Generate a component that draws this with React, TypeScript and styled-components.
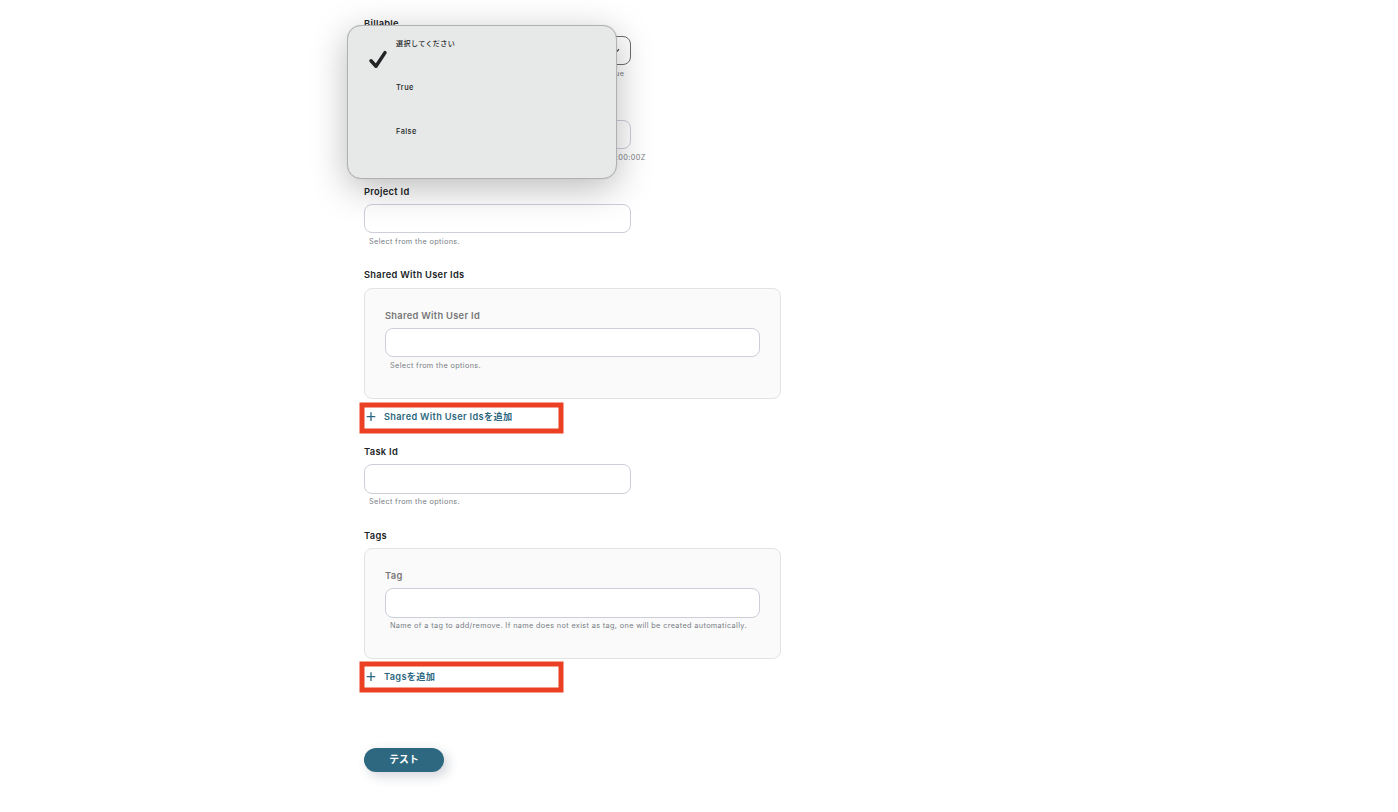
import type { ReactNode } from 'react';
import React from 'react';
import styled, { createGlobalStyle } from 'styled-components';

const colors = {
  text: '#222426',
  muted: '#777777',
  hint: '#777c84',
  border: '#cccfd8',
  borderActive: '#6b6e71',
  panel: '#fafafa',
  panelBorder: '#e3e3e5',
  primary: '#2d6880',
  highlight: '#ec4025',
  menu: '#e7e9e8',
};

const GlobalStyles = createGlobalStyle`
  * {
    box-sizing: border-box;
  }

  body {
    margin: 0;
    background: #fff;
    font-family: Inter, 'Noto Sans CJK JP', sans-serif;
    color: ${colors.text};
  }
`;

const Page = styled.main`
  display: flex;
  flex-direction: column;
  align-items: flex-start;
  position: relative;
  height: 812px;
  overflow: hidden;
  padding: 17px 0 0 364px;
`;

const FieldBox = styled.div<{ $gap?: number }>`
  display: flex;
  flex-direction: column;
  width: 100%;
  margin-bottom: ${props => props.$gap ?? 22}px;
`;

const Label = styled.label<{ $muted?: boolean; $space?: number }>`
  height: 13px;
  margin-bottom: ${props => props.$space ?? 6}px;
  font-size: 9.3px;
  font-weight: 600;
  line-height: 13px;
  letter-spacing: 0.3px;
  white-space: nowrap;
  color: ${props => (props.$muted ? colors.muted : colors.text)};
`;

const Control = styled.div<{
  $width?: string;
  $height?: number;
  $active?: boolean;
}>`
  display: flex;
  align-items: center;
  justify-content: flex-end;
  width: ${props => props.$width ?? '267px'};
  height: ${props => props.$height ?? 29}px;
  padding-right: 10px;
  border: 1px solid
    ${props => (props.$active ? colors.borderActive : colors.border)};
  border-radius: 8px;
  background: #fff;
`;

const Hint = styled.p<{ $top?: number; $width?: number }>`
  width: ${props => (props.$width ? props.$width + 'px' : 'auto')};
  height: 11px;
  margin: ${props => props.$top ?? 3}px 0 0 5px;
  font-size: 7.3px;
  line-height: 11px;
  letter-spacing: 0.36px;
  white-space: nowrap;
  text-align: ${props => (props.$width ? 'right' : 'left')};
  color: ${colors.hint};
`;

const Panel = styled.section`
  width: 417px;
  height: 111px;
  padding: 20px;
  border: 1px solid ${colors.panelBorder};
  border-radius: 8px;
  background: ${colors.panel};
`;

const AddButton = styled.button<{ $top: number; $bottom: number }>`
  display: flex;
  align-items: center;
  position: relative;
  gap: 8px;
  width: 194px;
  height: 13px;
  margin: ${props => props.$top}px 0 ${props => props.$bottom}px;
  padding: 0 0 0 2px;
  border: 0;
  background: none;
  font-family: inherit;
  font-size: 9.2px;
  font-weight: 600;
  line-height: 13px;
  letter-spacing: 0.33px;
  white-space: nowrap;
  color: ${colors.primary};
`;

const Highlight = styled.span<{ $top: number }>`
  position: absolute;
  top: ${props => props.$top}px;
  left: -4px;
  width: 203px;
  height: 30px;
  border: 4px solid ${colors.highlight};
  box-shadow:
    0 0 0 0.5px ${colors.highlight},
    inset 0 0 0 0.5px ${colors.highlight};
`;

const AddIcon = styled.svg`
  flex: none;
  width: 10px;
  height: 10px;
`;

const TestButton = styled.button`
  width: 80px;
  height: 24px;
  padding: 0;
  border: 0;
  border-radius: 12px;
  background: ${colors.primary};
  box-shadow: 4px 4px 12px rgba(45, 60, 80, 0.22);
  font-family: inherit;
  font-size: 9.8px;
  font-weight: 600;
  line-height: 22px;
  color: #fff;
`;

const Menu = styled.ul`
  position: absolute;
  top: 25px;
  left: 347px;
  width: 270px;
  height: 154px;
  margin: 0;
  padding: 12px 0 0 48px;
  border: 1px solid #b0b2b1;
  border-radius: 14px;
  background: ${colors.menu};
  box-shadow:
    0 0 1px rgba(0, 0, 0, 0.15),
    0 9px 36px rgba(0, 0, 0, 0.27);
  list-style: none;
`;

const MenuItem = styled.li<{ $size?: number }>`
  position: relative;
  height: 44px;
  font-size: ${props => props.$size ?? 7.4}px;
  font-weight: 500;
  line-height: 11px;
  letter-spacing: 0.45px;
`;

const CheckIcon = styled.svg`
  position: absolute;
  top: 11px;
  left: -28px;
  width: 21px;
  height: 21px;
`;

interface IField {
  label: string;
  hint: string;
  muted?: boolean;
  active?: boolean;
  width?: string;
  height?: number;
  hintTop?: number;
  hintWidth?: number;
  gap?: number;
  children?: ReactNode;
}

const Field: React.FC<IField> = props => (
  <FieldBox $gap={props.gap}>
    <Label $muted={props.muted}>{props.label}</Label>
    <Control
      $width={props.width}
      $height={props.height}
      $active={props.active}>
      {props.children}
    </Control>
    <Hint $top={props.hintTop} $width={props.hintWidth}>
      {props.hint}
    </Hint>
  </FieldBox>
);

interface IAdd {
  top: number;
  bottom: number;
  frameTop: number;
  children: ReactNode;
}

const Add: React.FC<IAdd> = ({ top, bottom, frameTop, children }) => (
  <AddButton $top={top} $bottom={bottom}>
    <AddIcon viewBox="0 0 10 10" fill="none" stroke="currentColor">
      <path d="M5 0.3v8.6M0.7 4.6h8.6" strokeWidth="1.3" />
    </AddIcon>
    <span>{children}</span>
    <Highlight $top={frameTop} />
  </AddButton>
);

const App = () => (
  <>
    <GlobalStyles />
    <Page>
      <Field label="Billable" hint="True" hintWidth={255.4} active>
        <svg width="9" height="6" viewBox="0 0 9 6" fill="none">
          <path d="M1 1.2L4.5 4.6L8 1.2" stroke="#44474a" strokeWidth="1.2" />
        </svg>
      </Field>
      <Field label="Date" hint="00:00:00Z" hintWidth={276.6} />
      <Field
        label="Project Id"
        hint="Select from the options."
        gap={21}
      />
      <Label $space={7}>Shared With User Ids</Label>
      <Panel>
        <Field
          label="Shared With User Id"
          hint="Select from the options."
          width="100%"
          muted
        />
      </Panel>
      <Add top={11} bottom={22} frameTop={-7}>
        Shared With User Idsを追加
      </Add>
      <Field
        label="Task Id"
        hint="Select from the options."
        height={30}
        hintTop={2}
      />
      <Label>Tags</Label>
      <Panel>
        <Field
          label="Tag"
          hint="Name of a tag to add/remove. If name does not exist as tag, one will be created automatically."
          width="100%"
          height={30}
          hintTop={2}
          muted
        />
      </Panel>
      <Add top={11} bottom={65} frameTop={-8}>
        Tagsを追加
      </Add>
      <TestButton>テスト</TestButton>
      <Menu>
        <MenuItem $size={7}>
          <CheckIcon viewBox="0 0 21 21" fill="none">
            <path
              d="M3 11.8L8 17.2L17 3.6"
              stroke="#222426"
              strokeWidth="3.5"
              strokeLinecap="round"
              strokeLinejoin="round"
            />
          </CheckIcon>
          選択してください
        </MenuItem>
        <MenuItem>True</MenuItem>
        <MenuItem>False</MenuItem>
      </Menu>
    </Page>
  </>
);

export default App;
